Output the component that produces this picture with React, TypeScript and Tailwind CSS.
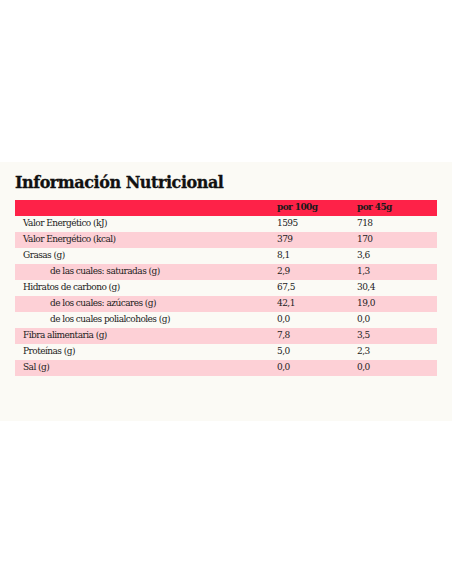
const rows = [
    { label: 'Valor Energético (kJ)', a: '1595', b: '718', pink: false, sub: false },
    { label: 'Valor Energético (kcal)', a: '379', b: '170', pink: true, sub: false },
    { label: 'Grasas (g)', a: '8,1', b: '3,6', pink: false, sub: false },
    { label: 'de las cuales: saturadas (g)', a: '2,9', b: '1,3', pink: true, sub: true },
    { label: 'Hidratos de carbono (g)', a: '67,5', b: '30,4', pink: false, sub: false },
    { label: 'de los cuales: azúcares (g)', a: '42,1', b: '19,0', pink: true, sub: true },
    { label: 'de los cuales polialcoholes (g)', a: '0,0', b: '0,0', pink: false, sub: true },
    { label: 'Fibra alimentaria (g)', a: '7,8', b: '3,5', pink: true, sub: false },
    { label: 'Proteínas (g)', a: '5,0', b: '2,3', pink: false, sub: false },
    { label: 'Sal (g)', a: '0,0', b: '0,0', pink: true, sub: false },
]

const App = () => {
    return (
        <div className="w-[452px] h-[584px] bg-white pt-[162px] font-['DejaVu_Serif',serif]">
            <div className="h-[259px] bg-[#fbfaf5] px-[15px] pt-[10px]">
                <h1 className="text-[16px] leading-[22px] font-bold tracking-[-0.45px] text-[#111] [-webkit-text-stroke:0.3px_#111]">
                    Información Nutricional
                </h1>
                <div className="mt-[6px]">
                    <div className="grid grid-cols-[254px_80px_1fr] pl-2 h-4 items-center bg-[#fe2248] text-[9px] font-bold text-[#1a1a1a] tracking-[-0.6px]">
                        <span></span>
                        <span>por 100g</span>
                        <span>por 45g</span>
                    </div>
                    {rows.map((r, i) => (
                        <div
                            key={i}
                            className={`grid grid-cols-[254px_80px_1fr] pl-2 h-4 items-center text-[9px] text-[#222] tracking-[-0.55px] ${r.pink ? 'bg-[#fdd0d6]' : ''}`}
                        >
                            <span className={r.sub ? 'pl-[27px]' : ''}>{r.label}</span>
                            <span>{r.a}</span>
                            <span>{r.b}</span>
                        </div>
                    ))}
                </div>
            </div>
        </div>
    )
}

export default App
